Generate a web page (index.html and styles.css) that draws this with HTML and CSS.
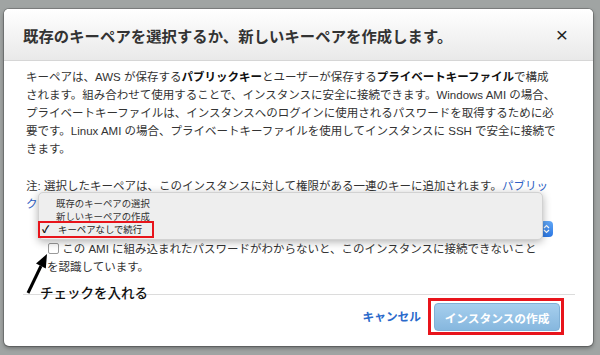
FILE: index.html
```html
<!DOCTYPE html>
<html lang="ja">
  <head>
    <meta charset="utf-8">
    <title>キーペアの選択</title>
    <link rel="stylesheet" href="styles.css">
  </head>
  <body>
    <div class="page">
      <div class="modal">
        <div class="modal-header">
          <h1 class="title">既存のキーペアを選択するか、新しいキーペアを作成します。</h1>
          <span class="close">×</span>
        </div>

        <div class="modal-body">
          <p class="intro">
            キーペアは、AWS が保存する<b>パブリックキー</b>とユーザーが保存する<b>プライベートキーファイル</b>で構成<br>
            されます。組み合わせて使用することで、インスタンスに安全に接続できます。Windows AMI の場合、<br>
            プライベートキーファイルは、インスタンスへのログインに使用されるパスワードを取得するために必<br>
            要です。Linux AMI の場合、プライベートキーファイルを使用してインスタンスに SSH で安全に接続で<br>
            きます。
          </p>
          <p class="intro note">
            注: 選択したキーペアは、このインスタンスに対して権限がある一連のキーに追加されます。<a href="#">パブリッ<br>ク</a>
          </p>

          <div class="select-row">
            <span class="stepper">
              <svg width="7" height="10" viewBox="0 0 7 10"><path d="M1 4 L3.5 1.5 L6 4 M1 6 L3.5 8.5 L6 6" fill="none" stroke="#fff" stroke-width="1.2"/></svg>
            </span>
            <div class="popup">
              <div class="option">既存のキーペアの選択</div>
              <div class="option">新しいキーペアの作成</div>
              <div class="option selected"><span class="check">✓</span>キーペアなしで続行</div>
            </div>
          </div>

          <label class="check-row">
            <span class="box"></span> この AMI に組み込まれたパスワードがわからないと、このインスタンスに接続できないこと<br>を認識しています。
          </label>
        </div>

        <div class="modal-footer">
          <a class="cancel" href="#">キャンセル</a>
          <span class="highlight"><button class="primary">インスタンスの作成</button></span>
        </div>

        <svg class="arrow" width="40" height="50" viewBox="0 0 40 50">
          <line x1="6" y1="44" x2="19" y2="17" stroke="#000" stroke-width="3"/>
          <polygon points="25,5 23.8,19.4 14,14.6" fill="#000"/>
        </svg>
        <span class="memo">チェックを入れる</span>
      </div>
    </div>
  </body>
</html>
```

FILE: styles.css
```css
body {
  margin: 0;
  background: #a0a4a3;
  font-family: "Liberation Sans", "Noto Sans CJK JP", sans-serif;
  color: #333;
}
.page {
  height: 355px;
  padding: 9px 7px 0 4px;
  box-sizing: border-box;
}
.modal {
  position: relative;
  height: 337px;
  background: #fff;
  border-radius: 5px;
  box-shadow: 0 0 0 1px rgba(0, 0, 0, 0.2), 0 2px 4px rgba(0, 0, 0, 0.35);
  display: flex;
  flex-direction: column;
}
.modal-header {
  height: 51px;
  border-bottom: 1px solid #d6d6d6;
  border-radius: 5px 5px 0 0;
  background: linear-gradient(#ffffff, #e9e9e9);
  display: flex;
  align-items: center;
  justify-content: space-between;
  padding: 0 25px 0 19px;
}
.title {
  margin: 0;
  font-size: 15.3px;
  font-weight: bold;
  color: #333;
  letter-spacing: 0.1px;
}
.close {
  font-size: 21px;
  color: #222;
  line-height: 1;
}
.modal-body {
  padding: 7px 28px 18px 22px;
}
.intro {
  margin: 0;
  font-size: 11.5px;
  line-height: 18px;
  white-space: nowrap;
  color: #333;
}
.intro b {
  color: #111;
}
.note {
  margin-top: 19px;
}
.note a {
  color: #2f5fc4;
  text-decoration: none;
}
.select-row {
  position: relative;
  margin: 8px 12px 0 12px;
  height: 17px;
  display: flex;
  justify-content: flex-end;
}
.stepper {
  width: 13px;
  height: 16px;
  border-radius: 4px;
  background: linear-gradient(#62a8f7, #2c78e4);
  display: flex;
  align-items: center;
  justify-content: center;
}
.popup {
  position: absolute;
  left: 0;
  top: -29px;
  width: 505px;
  height: 48px;
  box-sizing: border-box;
  padding-top: 4px;
  background: #eeeeee;
  border: 1px solid #d2d2d2;
  border-radius: 5px;
  box-shadow: 0 2px 8px rgba(0, 0, 0, 0.3);
  font-size: 9.4px;
  line-height: 13px;
  color: #333;
}
.option {
  padding-left: 17px;
}
.option.selected {
  width: fit-content;
  margin: -2px 0 0 -1px;
  padding: 0 10px 0 2px;
  border: 2px solid #e8141b;
  color: #222;
}
.check {
  display: inline-block;
  width: 16px;
  font-size: 10px;
  font-weight: bold;
  color: #000;
}
.check-row {
  display: block;
  margin: 2px 0 0 21px;
  font-size: 11.5px;
  line-height: 18px;
  white-space: nowrap;
}
.box {
  display: inline-block;
  width: 9px;
  height: 9px;
  border: 1px solid #9a9a9a;
  border-radius: 2px;
  vertical-align: -1px;
  margin-left: 1px;
}
.modal-footer {
  flex: 1;
  margin: 0 18px 0 19px;
  border-top: 1px solid #dcdcdc;
  padding: 3px 11px 0 0;
  display: flex;
  justify-content: flex-end;
  align-items: flex-start;
}
.cancel {
  margin-top: 10px;
  margin-right: 7px;
  font-size: 11.7px;
  font-weight: bold;
  color: #2a6acb;
  text-decoration: none;
  line-height: 18px;
}
.highlight {
  display: block;
  border: 3px solid #e8141b;
  padding: 2px 1px 1px 3px;
}
.primary {
  display: block;
  width: 126px;
  height: 28px;
  padding: 0;
  font-family: inherit;
  font-size: 11.7px;
  font-weight: bold;
  color: #fff;
  background: linear-gradient(#a6cfee, #86b7de);
  border: 1px solid #80b0d6;
  border-radius: 4px;
}
.arrow {
  position: absolute;
  left: 18px;
  top: 240px;
}
.memo {
  position: absolute;
  left: 36px;
  top: 276px;
  font-size: 13.5px;
  line-height: 18px;
  color: #111;
  font-weight: 500;
}
```
